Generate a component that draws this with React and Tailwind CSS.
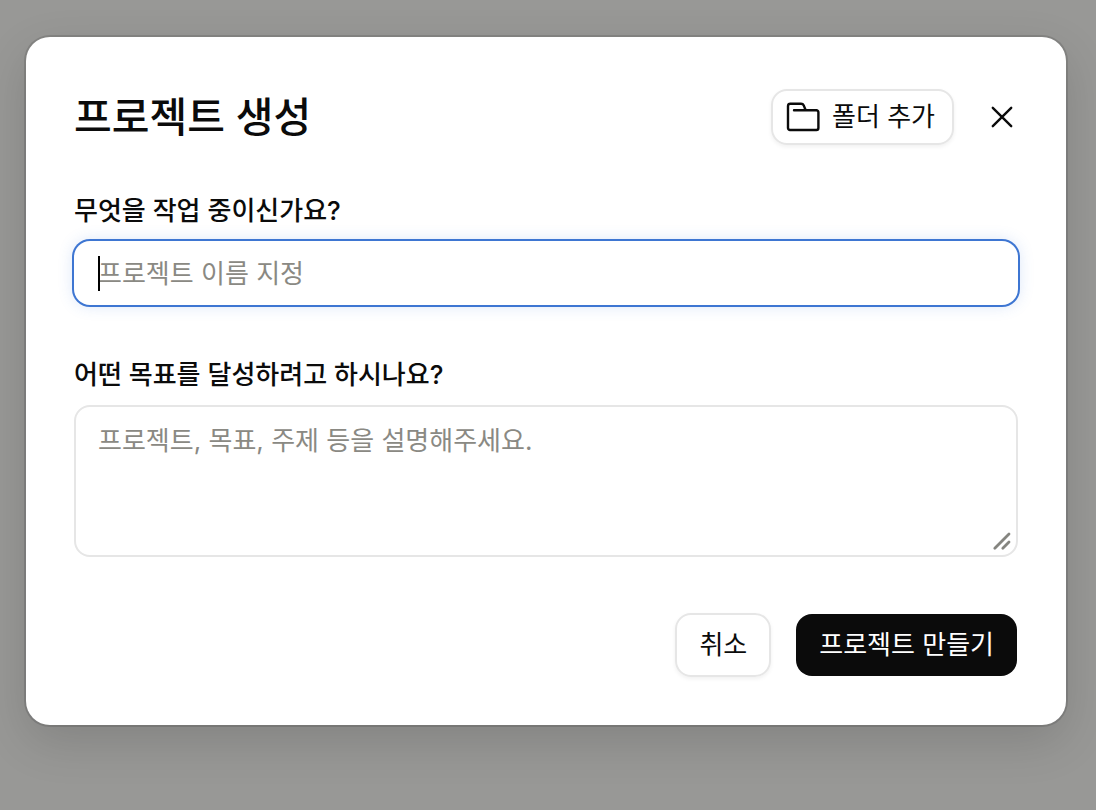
import { useState } from 'react';

function FolderIcon() {
    return (
        <svg width="34" height="30" viewBox="0 0 34 30" fill="none" stroke="currentColor" strokeWidth="2.4" strokeLinecap="round" strokeLinejoin="round" aria-hidden="true">
            <path d="M8 8.2H30.4A2 2 0 0 1 32.4 10.2V26A2 2 0 0 1 30.4 28H4A2 2 0 0 1 2 26V4A2.3 2.3 0 0 1 4.3 1.8H15C16.4 1.8 17.2 2.3 17.8 3.6L19.6 8" />
        </svg>
    );
}

function CloseIcon() {
    return (
        <svg width="24" height="24" viewBox="0 0 24 24" fill="none" stroke="currentColor" strokeWidth="2.4" strokeLinecap="round" aria-hidden="true">
            <path d="M2.8 2.8L21.2 21.2M21.2 2.8L2.8 21.2" />
        </svg>
    );
}

function ResizeGrip() {
    return (
        <svg className="pointer-events-none absolute right-1.5 bottom-1.5" width="20" height="20" viewBox="0 0 20 20" fill="none" stroke="#858580" strokeWidth="2.8" strokeLinecap="round" aria-hidden="true">
            <path d="M2.8 17.2L17 3M10.8 17.2L17 11" />
        </svg>
    );
}

export default function App() {
    const [name, setName] = useState('');
    const [goal, setGoal] = useState('');

    return (
        <div className="min-h-screen bg-[#989896] pt-[37px] pr-[30px] pb-12 pl-[26px] font-['Inter','Noto_Sans_CJK_KR',sans-serif] text-[26px] leading-9 text-[#0b0b0b]">
            <form
                role="dialog"
                aria-labelledby="dialog-title"
                onSubmit={e => e.preventDefault()}
                className="rounded-3xl bg-white p-12 shadow-[0_0_0_2px_rgba(0,0,0,0.12),0_16px_48px_rgba(0,0,0,0.14)]"
            >
                <header className="flex h-16 items-center justify-between">
                    <h1 id="dialog-title" className="text-[41px] leading-[48px] font-medium">프로젝트 생성</h1>
                    <div className="-mr-2 flex items-center gap-6">
                        <button type="button" className="flex h-14 items-center gap-3 rounded-2xl border-2 border-[#e6e6e6] pr-[17px] pl-[13px] shadow-[0_2px_4px_rgba(0,0,0,0.06)]">
                            <FolderIcon />
                            폴더 추가
                        </button>
                        <button type="button" aria-label="닫기" className="flex size-12 items-center justify-center">
                            <CloseIcon />
                        </button>
                    </div>
                </header>

                {/* Name */}
                <div className="mt-11 flex flex-col gap-3">
                    <label htmlFor="project-name" className="font-medium">무엇을 작업 중이신가요?</label>
                    <div className="relative">
                        <input
                            id="project-name"
                            type="text"
                            autoFocus
                            value={name}
                            onChange={e => setName(e.target.value)}
                            placeholder="프로젝트 이름 지정"
                            className={`block h-16 w-full rounded-2xl bg-white px-6 shadow-[0_0_16px_rgba(60,120,220,0.22)] ring-2 ring-[#3e76d2] outline-none placeholder:text-[#8a8983] ${name ? 'caret-black' : 'caret-transparent'}`}
                        />
                        {!name && <span className="pointer-events-none absolute top-[15px] left-6 h-[35px] w-0.5 bg-black" />}
                    </div>
                </div>

                {/* Goal */}
                <div className="mt-[52px] flex flex-col gap-3">
                    <label htmlFor="project-goal" className="font-medium">어떤 목표를 달성하려고 하시나요?</label>
                    <div className="relative">
                        <textarea
                            id="project-goal"
                            value={goal}
                            onChange={e => setGoal(e.target.value)}
                            placeholder="프로젝트, 목표, 주제 등을 설명해주세요."
                            className="block h-[152px] w-full resize-none rounded-2xl border-2 border-[#e6e6e6] bg-white px-[22px] py-4 outline-none placeholder:text-[#8a8983]"
                        />
                        <ResizeGrip />
                    </div>
                </div>

                <footer className="mt-14 flex items-center justify-end gap-6">
                    <button type="button" className="h-16 rounded-2xl border-2 border-[#e6e6e6] px-[22px] shadow-[0_2px_4px_rgba(0,0,0,0.06)]">취소</button>
                    <button type="submit" className="mx-px h-[62px] rounded-2xl bg-[#0b0b0b] px-[23px] text-white">프로젝트 만들기</button>
                </footer>
            </form>
        </div>
    );
}
